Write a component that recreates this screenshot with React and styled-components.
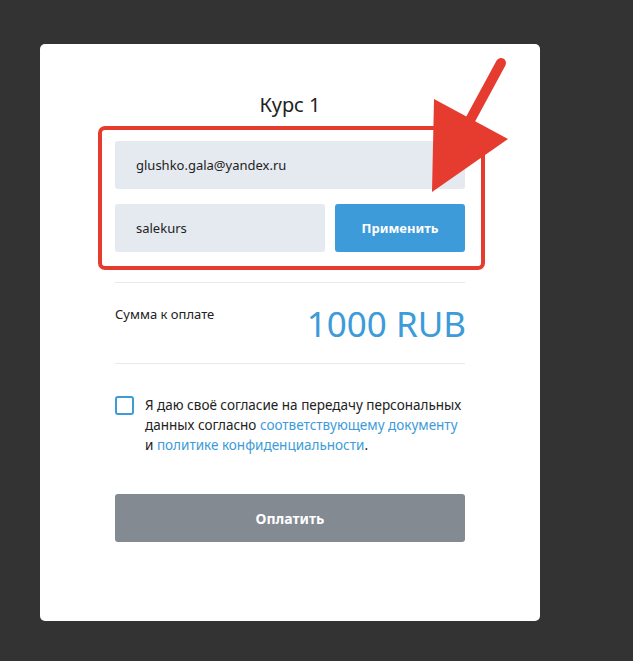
import styled, { createGlobalStyle } from "styled-components";

const GlobalStyle = createGlobalStyle`
  html, body {
    margin: 0;
    padding: 0;
    background: #333333;
  }
  body {
    font-family: "Noto Sans", "Open Sans", sans-serif;
  }
`;

const Page = styled.div`
  width: 633px;
  height: 661px;
  padding: 44px 0 0 40px;
  box-sizing: border-box;
  position: relative;
`;

const Card = styled.div`
  width: 500px;
  height: 577px;
  background: #ffffff;
  border-radius: 5px;
  box-sizing: border-box;
  padding: 47px 75px 0;
  display: flex;
  flex-direction: column;
`;

const Title = styled.h1`
  margin: 0;
  font-size: 20px;
  line-height: 28px;
  font-weight: 400;
  color: #222222;
  text-align: center;
`;

const Form = styled.div`
  position: relative;
  margin-top: 22px;
  display: flex;
  flex-direction: column;
  gap: 15px;
`;

const Highlight = styled.div`
  position: absolute;
  top: -15px;
  left: -17px;
  right: -20px;
  bottom: -18px;
  border: 4px solid #e53c2f;
  border-radius: 7px;
  pointer-events: none;
`;

const Field = styled.div`
  height: 48px;
  flex: ${(p) => (p.$grow ? 1 : "none")};
  background: #e5e9f0;
  border-radius: 3px;
  display: flex;
  align-items: center;
  padding: 0 21px;
  font-size: 13px;
  color: #222;
`;

const Row = styled.div`
  display: flex;
  gap: 10px;
`;

const Button = styled.button`
  height: 48px;
  width: ${(p) => p.$width || "100%"};
  border: none;
  border-radius: 3px;
  background: ${(p) => p.$bg};
  color: #ffffff;
  font-family: inherit;
  font-size: ${(p) => p.$size || "13px"};
  font-weight: 700;
  cursor: pointer;
`;

const Divider = styled.div`
  height: 1px;
  background: #e6eaef;
  margin-top: ${(p) => p.$top};
`;

const Sum = styled.div`
  display: flex;
  justify-content: space-between;
  align-items: flex-start;
  height: 80px;
  box-sizing: border-box;
  padding-top: 21px;
`;

const SumLabel = styled.span`
  font-size: 13px;
  line-height: 20px;
  color: #222;
`;

const SumValue = styled.span`
  font-size: 35px;
  line-height: 40px;
  color: #3d9bd9;
  margin-right: -1px;
`;

const Consent = styled.label`
  display: flex;
  gap: 11px;
  margin-top: 31px;
`;

const Box = styled.span`
  flex: none;
  width: 19px;
  height: 19px;
  box-sizing: border-box;
  border: 2px solid #3d9bd9;
  border-radius: 3px;
  margin-top: 1px;
`;

const ConsentText = styled.span`
  font-size: 13.5px;
  line-height: 20px;
  color: #222;
`;

const Link = styled.a`
  color: #3d9bd9;
  text-decoration: none;
`;

const PayWrap = styled.div`
  margin-top: 39px;
`;

const Arrow = styled.svg`
  position: absolute;
  left: 0;
  top: 0;
  pointer-events: none;
`;

export default function App() {
  return (
    <>
      <GlobalStyle />
      <Page>
        <Card>
          <Title>Курс 1</Title>
          <Form>
            <Field>glushko.gala@yandex.ru</Field>
            <Row>
              <Field $grow>salekurs</Field>
              <Button $bg="#3d9bd9" $width="130px">
                Применить
              </Button>
            </Row>
            <Highlight />
          </Form>
          <Divider $top="30px" />
          <Sum>
            <SumLabel>Сумма к оплате</SumLabel>
            <SumValue>1000 RUB</SumValue>
          </Sum>
          <Divider $top="0" />
          <Consent>
            <Box />
            <ConsentText>
              Я даю своё согласие на передачу персональных данных согласно{" "}
              <Link href="#">соответствующему документу</Link> и{" "}
              <Link href="#">политике конфиденциальности</Link>.
            </ConsentText>
          </Consent>
          <PayWrap>
            <Button $bg="#848a91" $size="14px">
              Оплатить
            </Button>
          </PayWrap>
        </Card>
        <Arrow width="633" height="661" viewBox="0 0 633 661">
          <line
            x1="501"
            y1="63"
            x2="462"
            y2="135"
            stroke="#e53c2f"
            strokeWidth="10"
            strokeLinecap="round"
          />
          <polygon points="434,99 508,139 432,192" fill="#e53c2f" />
        </Arrow>
      </Page>
    </>
  );
}
